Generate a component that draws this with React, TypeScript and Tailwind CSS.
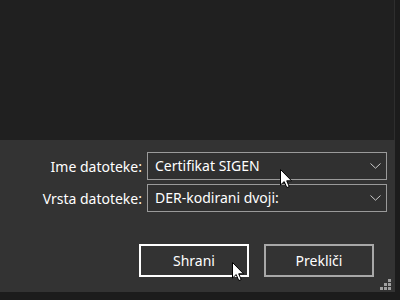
import React from "react";

const Chevron = () => (
  <svg width="11" height="6" viewBox="0 0 11 6" className="shrink-0">
    <path d="M0.5 0.5 L5.5 5.2 L10.5 0.5" fill="none" stroke="#c8c8c8" strokeWidth="1" />
  </svg>
);

const Cursor = ({ className }: { className: string }) => (
  <svg width="13" height="20" viewBox="0 0 13 20" className={className}>
    <path
      d="M0.5 0.5 L0.5 16 L4.2 12.6 L6.8 18.6 L9.2 17.6 L6.7 11.8 L11.6 11.8 Z"
      fill="#ffffff"
      stroke="#000000"
      strokeWidth="1"
      strokeLinejoin="round"
    />
  </svg>
);

const Field = ({ text }: { text: string }) => (
  <div className="flex h-[28px] w-[240px] items-center justify-between border border-[#9a9a9a] bg-[#303030] pl-[7px] pr-[5px]">
    <span className="whitespace-nowrap text-[14px] leading-[20px] text-white">{text}</span>
    <Chevron />
  </div>
);

export default function App() {
  return (
    <div
      className="relative flex h-[300px] w-[400px] flex-col overflow-hidden bg-[#1c1c1c]"
      style={{ fontFamily: '"Noto Sans", "Open Sans", sans-serif' }}
    >
      <div className="flex h-[140px]">
        <div className="w-[394px] bg-[#202020]" />
        <div className="w-[1px] bg-[#2e2e2e]" />
      </div>
      <div className="flex h-[152px]">
        <div className="flex w-[395px] flex-col bg-[#333333] pt-[12px]">
          <div className="flex items-center">
            <div className="w-[142px] text-right text-[14px] text-white">Ime datoteke:</div>
            <div className="ml-[5px]">
              <Field text="Certifikat SIGEN" />
            </div>
          </div>
          <div className="mt-[4px] flex items-center">
            <div className="w-[142px] text-right text-[14px] text-white">Vrsta datoteke:</div>
            <div className="ml-[5px]">
              <Field text="DER-kodirani dvoji:" />
            </div>
          </div>
          <div className="mt-[32px] flex pl-[139px]">
            <div className="flex h-[33px] w-[110px] items-center justify-center border-2 border-white bg-[#333333] text-[14px] text-white">
              Shrani
            </div>
            <div className="ml-[15px] flex h-[33px] w-[110px] items-center justify-center border-2 border-[#a8a8a8] bg-[#333333] text-[14px] text-white">
              Prekliči
            </div>
          </div>
          <div className="mt-[2px] flex justify-end pr-[4px]">
            <div className="grid grid-cols-3 gap-[1px]">
              <div className="h-[3px] w-[3px]" />
              <div className="h-[3px] w-[3px]" />
              <div className="h-[3px] w-[3px] bg-[#a0a0a0]" />
              <div className="h-[3px] w-[3px]" />
              <div className="h-[3px] w-[3px] bg-[#a0a0a0]" />
              <div className="h-[3px] w-[3px] bg-[#a0a0a0]" />
              <div className="h-[3px] w-[3px] bg-[#a0a0a0]" />
              <div className="h-[3px] w-[3px] bg-[#a0a0a0]" />
              <div className="h-[3px] w-[3px] bg-[#a0a0a0]" />
            </div>
          </div>
        </div>
      </div>
      <Cursor className="absolute left-[280px] top-[169px]" />
      <Cursor className="absolute left-[232px] top-[262px]" />
    </div>
  );
}
